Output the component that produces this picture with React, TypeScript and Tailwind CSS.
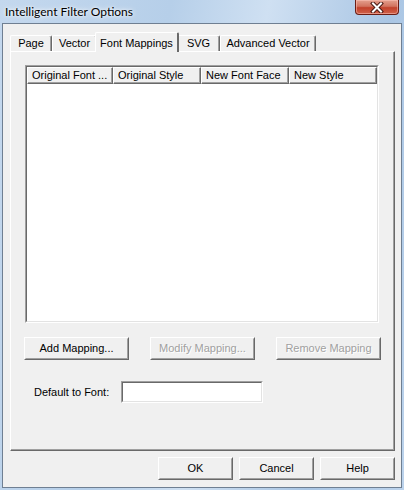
import type { ReactNode } from "react";

const TABS = [
  { label: "Page", w: "w-[42px]" },
  { label: "Vector", w: "w-[45px]" },
  { label: "Font Mappings", w: "w-[84px]", active: true },
  { label: "SVG", w: "w-[43px]" },
  { label: "Advanced Vector", w: "w-[96px]" },
];

const COLUMNS = [
  { label: "Original Font ...", w: "w-[86px]" },
  { label: "Original Style", w: "w-[88px]" },
  { label: "New Font Face", w: "w-[88px]" },
  { label: "New Style", w: "w-[88px]" },
];

function Button({
  children,
  w,
  disabled,
}: {
  children: ReactNode;
  w: string;
  disabled?: boolean;
}) {
  return (
    <div
      className={`${w} h-[23px] border border-t-white border-l-white border-r-[#696969] border-b-[#696969] bg-[#f0f0f0]`}
    >
      <div className="h-full border border-t-[#f0f0f0] border-l-[#f0f0f0] border-r-[#a0a0a0] border-b-[#a0a0a0] flex items-center justify-center">
        <span
          className={
            disabled
              ? "text-[#a0a0a0] [text-shadow:1px_1px_0_#fff]"
              : "text-black"
          }
        >
          {children}
        </span>
      </div>
    </div>
  );
}

function Sunken({ className, children }: { className: string; children?: ReactNode }) {
  return (
    <div
      className={`${className} border border-t-[#a0a0a0] border-l-[#a0a0a0] border-r-white border-b-white`}
    >
      <div className="h-full border border-t-[#696969] border-l-[#696969] border-r-[#e3e3e3] border-b-[#e3e3e3] bg-white overflow-hidden">
        {children}
      </div>
    </div>
  );
}

export default function App() {
  return (
    <div className="w-[404px] h-[490px] flex flex-col bg-[linear-gradient(100deg,#c4d8ee_0%,#b6cfe9_35%,#cfe0f2_55%,#aac6e4_80%,#bcd3ec_100%)] font-['Liberation_Sans',Arial,sans-serif] text-[11px] text-black select-none overflow-hidden">
      {/* title bar */}
      <div className="h-[23px] flex items-start justify-between pl-[5px] pr-[5px]">
        <div className="pt-[3px] font-['Lato','Noto_Sans',sans-serif] text-[12px] text-black [text-shadow:0_0_6px_#fff,0_0_3px_#fff]">
          Intelligent Filter Options
        </div>
        <div className="w-[44px] h-[15px] rounded-b-[4px] border border-t-0 border-[#6b1d14] bg-[linear-gradient(#e4a08e_0%,#d2735f_45%,#c2412b_55%,#d0624a_100%)] flex items-center justify-center shadow-[inset_0_0_0_1px_rgba(255,200,190,0.5)]">
          <svg width="14" height="11" viewBox="0 0 14 11">
            <path d="M3 1.5 L11 9.5 M11 1.5 L3 9.5" stroke="#4a1a14" strokeWidth="4" strokeLinecap="square" />
            <path d="M3 1.5 L11 9.5 M11 1.5 L3 9.5" stroke="#fff" strokeWidth="2" strokeLinecap="square" />
          </svg>
        </div>
      </div>

      {/* client area */}
      <div className="mx-[2px] mb-[2px] flex-1 border border-[#6f7f92] bg-[#f0f0f0] flex flex-col pt-[8px] pb-[6px]">
        {/* tab strip */}
        <div className="flex items-end h-[19px] pl-[7px]">
          {TABS.map((t) =>
            t.active ? (
              <div
                key={t.label}
                className={`${t.w} h-[20px] -mx-[2px] -mb-px relative z-10 bg-[#f0f0f0] border-l border-t border-l-white border-t-white border-r-2 border-r-[#696969] rounded-t-[2px] flex items-start justify-center pt-[2px]`}
              >
                {t.label}
              </div>
            ) : (
              <div
                key={t.label}
                className={`${t.w} h-[16px] bg-[#f0f0f0] border-l border-t border-l-white border-t-white border-r border-r-[#696969] shadow-[inset_-1px_0_0_#a0a0a0] rounded-t-[2px] flex items-center justify-center`}
              >
                {t.label}
              </div>
            )
          )}
        </div>

        {/* tab panel */}
        <div className="ml-[7px] w-[385px] h-[400px] border border-t-white border-l-white border-r-[#696969] border-b-[#696969] shadow-[inset_-1px_-1px_0_#a0a0a0] flex flex-col pl-[14px] pt-[13px]">
          <Sunken className="w-[354px] h-[258px]">
            <div className="flex h-[17px]">
              {COLUMNS.map((c) => (
                <div
                  key={c.label}
                  className={`${c.w} h-full border border-t-white border-l-white border-r-[#696969] border-b-[#696969] bg-[#f0f0f0] shadow-[inset_-1px_-1px_0_#a0a0a0] flex items-center pl-[4px] whitespace-nowrap`}
                >
                  {c.label}
                </div>
              ))}
            </div>
          </Sunken>

          <div className="flex gap-[21px] mt-[14px] -ml-px">
            <Button w="w-[105px]">Add Mapping...</Button>
            <Button w="w-[105px]" disabled>
              Modify Mapping...
            </Button>
            <Button w="w-[105px]" disabled>
              Remove Mapping
            </Button>
          </div>

          <div className="flex items-center mt-[21px] ml-[9px]">
            <div className="w-[87px]">Default to Font:</div>
            <Sunken className="w-[142px] h-[22px]" />
          </div>
        </div>

        {/* dialog buttons */}
        <div className="flex justify-end gap-[6px] pr-[6px] mt-[6px]">
          <Button w="w-[75px]">OK</Button>
          <Button w="w-[75px]">Cancel</Button>
          <Button w="w-[75px]">Help</Button>
        </div>
      </div>
    </div>
  );
}
